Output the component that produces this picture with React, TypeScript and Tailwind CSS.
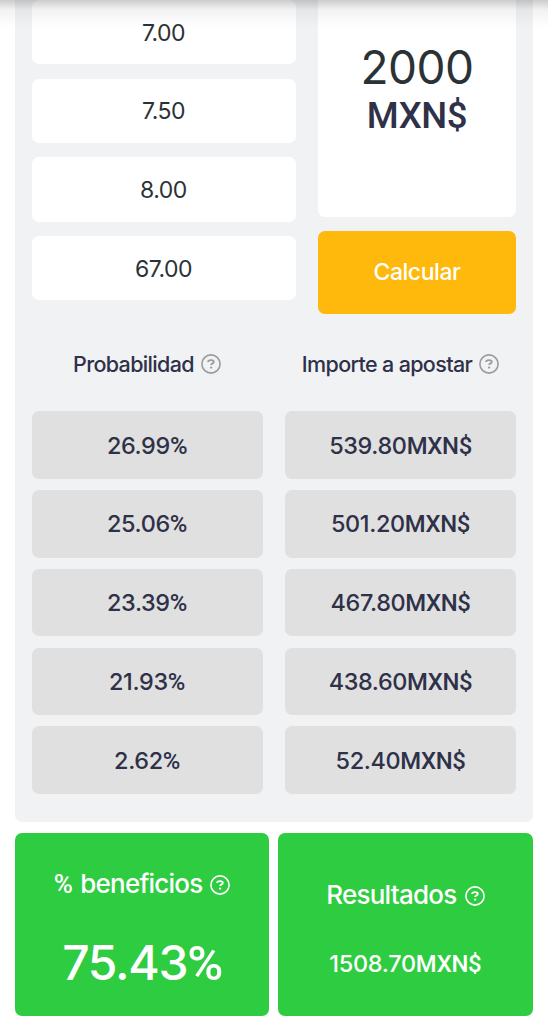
const odds = ['7.00', '7.50', '8.00', '67.00'];
const rows = [
  ['26.99', '539.80'],
  ['25.06', '501.20'],
  ['23.39', '467.80'],
  ['21.93', '438.60'],
  ['2.62', '52.40'],
];

function HelpIcon({ className }: { className: string }) {
  return (
    <svg viewBox="0 0 20 20" className={className} fill="none" stroke="currentColor" aria-hidden="true">
      <circle cx="10" cy="10" r="9.1" strokeWidth="1.6" />
      <path d="M7.1 8C7.1 6.8 8.2 6.1 10 6.1s2.8.7 2.8 1.8c0 1.6-2.7 1.4-2.7 3.2" strokeWidth="1.8" />
      <circle cx="10.1" cy="13.6" r="1.15" fill="currentColor" stroke="none" />
    </svg>
  );
}

function Amount({ value, unit }: { value: string; unit: string }) {
  return (
    <span className="whitespace-nowrap">
      {value}
      <span className="font-['Roboto',sans-serif] text-[1.02em]">{unit}</span>
    </span>
  );
}

function Cell({ value, unit }: { value: string; unit: string }) {
  return (
    <div className="flex h-[67.5px] items-center justify-center rounded-[7px] bg-[#e0e0e0] pt-[2px] text-[23.4px] font-medium tracking-[-0.35px]">
      <Amount value={value} unit={unit} />
    </div>
  );
}

export default function App() {
  return (
    <main className="relative h-[1024px] w-[548px] overflow-hidden bg-white px-[15px] font-['Inter',sans-serif] text-[#2e3148]">
      <section className="h-[822px] w-[517.5px] rounded-b-[7px] bg-[#f1f2f4] px-[16.5px]">
        <div className="flex h-[314px] justify-between">
          <div className="flex w-[264px] flex-col gap-[14.5px]">
            {odds.map((odd) => (
              <div
                key={odd}
                className="flex h-[64.2px] shrink-0 items-center justify-center rounded-[7px] bg-white pt-[1.5px] text-[23px] tracking-[-0.5px] text-[#2b3236]"
              >
                {odd}
              </div>
            ))}
          </div>
          <div className="flex w-[198px] flex-col gap-[14.5px]">
            <div className="flex h-[216.5px] flex-col items-center rounded-b-[7px] bg-white pt-[39px]">
              <span className="text-[46px] leading-[56px] tracking-[-0.5px] text-[#2b3236]">2000</span>
              <span className="font-['Roboto',sans-serif] text-[36.5px] leading-[41px] font-medium tracking-[-0.4px]">
                MXN$
              </span>
            </div>
            <button className="h-[83px] rounded-[7px] bg-[#ffb80c] text-[23px] font-medium tracking-[-0.45px] text-white">
              Calcular
            </button>
          </div>
        </div>
        <div className="grid grid-cols-2 gap-x-[22.5px] pt-[35px] text-[21.5px] leading-[30px] font-medium tracking-[-0.65px]">
          <h2 className="flex items-center justify-center gap-[7px] whitespace-nowrap">
            Probabilidad
            <HelpIcon className="size-[20px] shrink-0 text-[#9b9b9b]" />
          </h2>
          <h2 className="flex items-center justify-center gap-[7px] whitespace-nowrap">
            Importe a apostar
            <HelpIcon className="size-[20px] shrink-0 text-[#9b9b9b]" />
          </h2>
        </div>
        <div className="grid grid-cols-2 gap-x-[22.5px] gap-y-[11.25px] pt-[32.3px]">
          {rows.flatMap(([chance, stake]) => [
            <Cell key={chance} value={chance} unit="%" />,
            <Cell key={stake} value={stake} unit="MXN$" />,
          ])}
        </div>
      </section>
      <section className="mt-[11.3px] grid w-[517.5px] grid-cols-2 gap-[9px] text-white">
        <div className="flex h-[182.7px] flex-col items-center rounded-[7px] bg-[#2ecc40]">
          <h2 className="mt-[34px] flex items-center gap-[8px] text-[26px] leading-[34px] font-medium tracking-[-0.8px] whitespace-nowrap">
            <span>
              <span className="mr-[2px] font-['Roboto',sans-serif]">%</span> beneficios
            </span>
            <HelpIcon className="mt-[2px] size-[20px] shrink-0" />
          </h2>
          <p className="mt-[32px] text-[48px] leading-[60px] font-medium tracking-[-1.3px]">
            <Amount value="75.43" unit="%" />
          </p>
        </div>
        <div className="flex h-[182.7px] flex-col items-center rounded-[7px] bg-[#2ecc40]">
          <h2 className="mt-[45px] flex items-center gap-[8px] text-[26px] leading-[34px] font-medium tracking-[-0.75px] whitespace-nowrap">
            Resultados
            <HelpIcon className="mt-[2px] size-[20px] shrink-0" />
          </h2>
          <p className="mt-[37px] text-[23.4px] leading-[30px] font-medium tracking-[-0.25px]">
            <Amount value="1508.70" unit="MXN$" />
          </p>
        </div>
      </section>
      <div className="absolute inset-x-0 top-0 h-[28px] bg-linear-to-b from-black/20 via-black/5 via-35% to-transparent" />
    </main>
  );
}
